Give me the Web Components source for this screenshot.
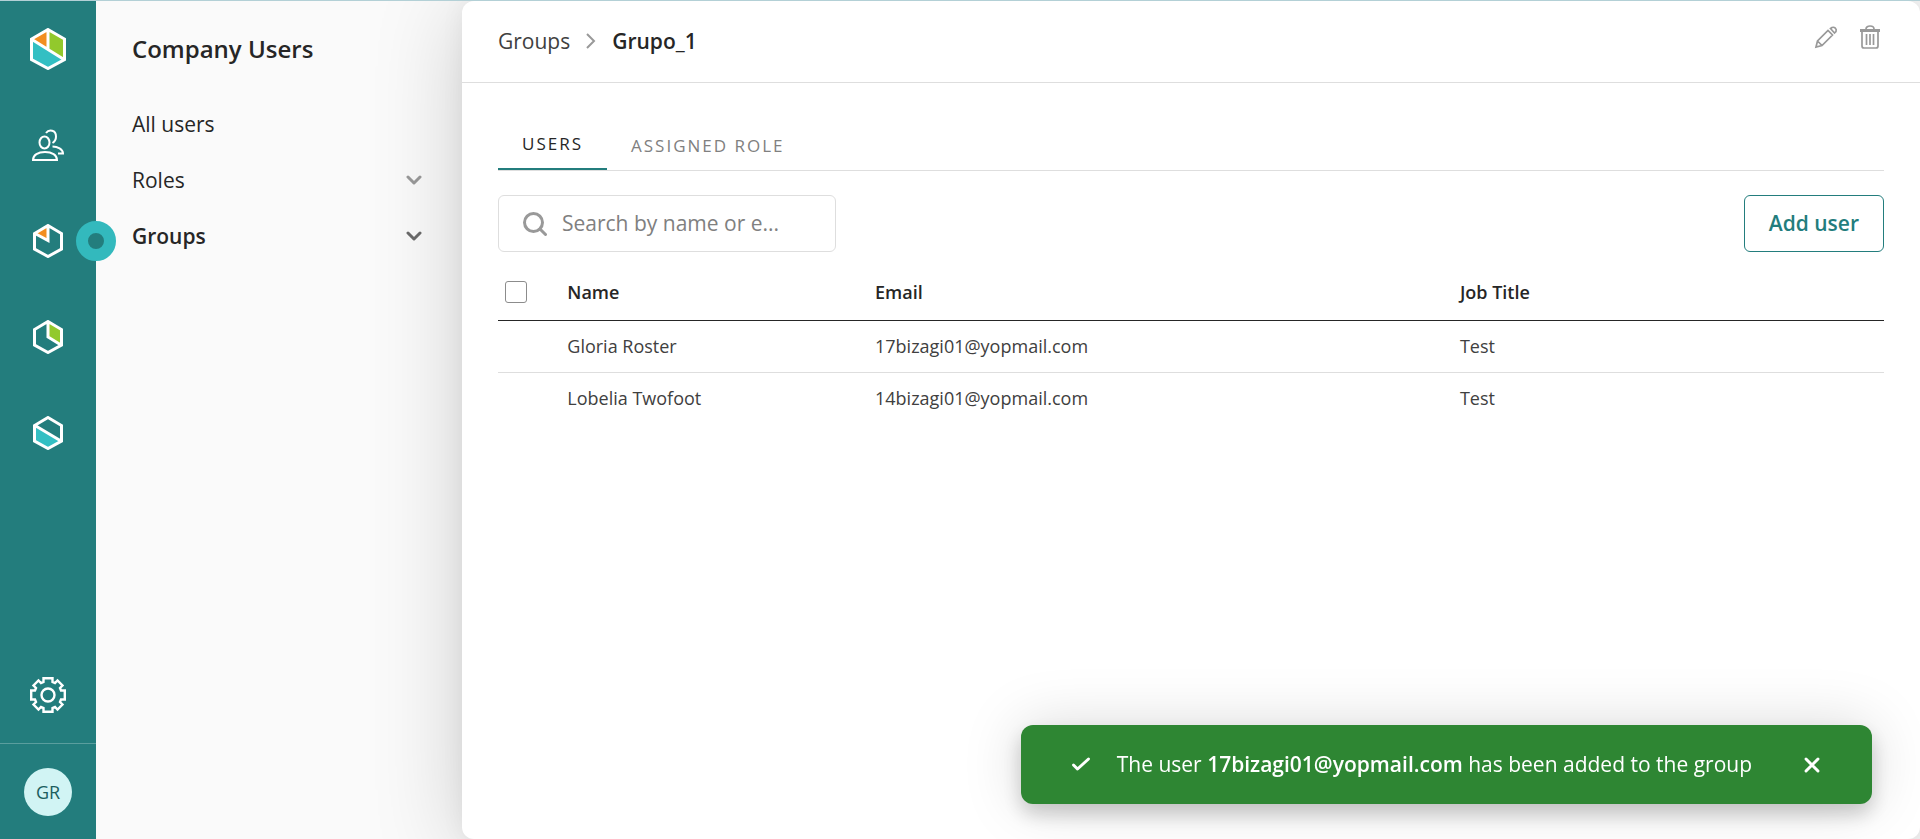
<!DOCTYPE html>
<html lang="en">
<head>
<meta charset="utf-8">
<meta name="viewport" content="width=device-width, initial-scale=1">
<title>Company Users – Groups</title>
<style>
  html, body { margin: 0; }
  body { font-family: "Open Sans", sans-serif; color: #262626; background: #fafafa; }
  toast-message b { font-weight: 600; }
</style>
</head>
<body>
<app-shell>
  <app-rail slot="rail"></app-rail>
  <side-panel slot="panel" heading="Company Users">
    <nav-item>All users</nav-item>
    <nav-item expandable>Roles</nav-item>
    <nav-item expandable current>Groups</nav-item>
  </side-panel>
  <page-header parent="Groups">Grupo_1</page-header>
  <page-content>
    <tab-strip></tab-strip>
    <tool-row>
      <search-box></search-box>
      <outline-button slot="end">Add user</outline-button>
    </tool-row>
    <user-table></user-table>
  </page-content>
</app-shell>
<toast-message>The user <b>17bizagi01@yopmail.com</b> has been added to the group</toast-message>

<script>
const define = (name, html, setup) => {
  const template = document.createElement('template');
  template.innerHTML = html;
  customElements.define(name, class extends HTMLElement {
    constructor() {
      super();
      this.attachShadow({ mode: 'open' }).append(template.content.cloneNode(true));
    }
    connectedCallback() {
      if (setup) setup(this, this.shadowRoot);
    }
  });
};

define('app-shell', `
  <style>
    :host { display: flex; min-height: 100vh; box-sizing: border-box; border-top: 1px solid #b3d0d6; overflow: hidden; }
    slot[name] { display: contents; }
    main { flex: 1; min-width: 0; position: relative; z-index: 1; background: #fff; border-radius: 12px;
      box-shadow: 0 0 24px rgba(0,0,0,.05), 0 8px 90px rgba(0,0,0,.18); }
  </style>
  <slot name="rail"></slot>
  <slot name="panel"></slot>
  <main><slot></slot></main>`);

define('app-rail', `
  <style>
    :host { display: flex; flex: none; width: 96px; background: #237d7d; position: relative; z-index: 2; }
    nav { flex: 1; display: flex; flex-direction: column; }
    a { display: grid; place-items: center; height: 96px; flex: none; position: relative; }
    .gap { flex: 1; }
    .account { height: 95px; border-top: 1px solid #5a9e9e; color: #1c5e5e; text-decoration: none; }
    .account span { width: 48px; line-height: 48px; border-radius: 50%; background: #d1f4f4; text-align: center;
      font-size: 18px; font-weight: 500; }
    svg { display: block; fill: none; }
    .toggle { position: absolute; right: -20px; top: 28px; width: 40px; height: 40px; border: 12px solid #33b9bd;
      border-radius: 50%; background: #237d7d; padding: 0; box-sizing: border-box; }
    .cell { position: relative; }
  </style>
  <nav aria-label="Main">
    <a href="#home" aria-label="Home"><svg width="36" height="42" viewBox="0 0 36 42">
      <path d="M18 2 2 11l16 10Z" fill="#f28e20"/><path d="M18 2l16 9v20L18 20Z" fill="#92c92c"/><path d="M2 11l32 20-16 9.500L2 31Z" fill="#33bfc3"/>
      <path d="M18 1.500 34.500 11v20.500L18 40.500 1.500 31.500V11ZM18 2v19M2 11.500l32 20" stroke="#fff" stroke-width="3"/></svg></a>
    <a href="#users" aria-label="Users"><svg width="32" height="32" viewBox="0 0 32 32" stroke="#fff" stroke-width="2">
      <ellipse cx="12.500" cy="13.500" rx="5" ry="6"/>
      <path d="M1 31c0-5 5-8 12-8s12 3 12 8Z"/>
      <path d="M14 4c3-4 10-3 10 3.500 0 3-1 5-3.500 6.500M20.500 17.500c5 0 10.500 2.500 10.500 7h-5"/></svg></a>
    <div class="cell">
      <a href="#company" aria-label="Company"><svg width="30" height="34" viewBox="0 0 30 34">
      <path d="M15 2 2 9.500l13 8Z" fill="#f28e20"/>
      <path d="M15 1.500l13.500 8v15.500L15 32.500 1.500 25V9.500ZM15 2v14.500L2 9.500" stroke="#fff" stroke-width="3"/></svg></a>
      <button class="toggle" type="button" aria-label="Collapse panel"></button>
    </div>
    <a href="#projects" aria-label="Projects"><svg width="30" height="34" viewBox="0 0 30 34">
      <path d="M15 2l13.500 7.500V25L15 17Z" fill="#92c92c"/>
      <path d="M15 1.500l13.500 8v15.500L15 32.500 1.500 25V9.500ZM15 2v15l13 8" stroke="#fff" stroke-width="3"/></svg></a>
    <a href="#portals" aria-label="Portals"><svg width="30" height="34" viewBox="0 0 30 34">
      <path d="M1.500 9.500 28 25l-13 7.500L1.500 25Z" fill="#33bfc3"/>
      <path d="M15 1.500l13.500 8v15.500L15 32.500 1.500 25V9.500ZM2 9.500l26 15.500" stroke="#fff" stroke-width="3"/></svg></a>
    <div class="gap"></div>
    <a href="#settings" aria-label="Settings"><svg width="36" height="36" viewBox="0 0 36 36" stroke="#fff" stroke-width="2.400">
      <path d="M13.500 1.200h9V5l2.500 1 2.500-2.500 5 5L30 11l1 2.500h3.800v9H31L30 25l2.500 2.500-5 5L25 30l-2.500 1v3.800h-9V31L11 30l-2.500 2.500-5-5L6 25l-1-2.500H1.200v-9H5L6 11 3.500 8.500l5-5L11 6l2.500-1Z"/>
      <circle cx="18" cy="18" r="6.500"/></svg></a>
    <a class="account" href="#account" aria-label="Account"><span>GR</span></a>
  </nav>`);

define('side-panel', `
  <style>
    :host { display: block; flex: none; width: 366px; box-sizing: border-box; padding: 28px 36px; background: #fafafa; }
    h1 { margin: 0 0 27px; font-size: 24px; line-height: 40px; font-weight: 600; }
  </style>
  <h1></h1>
  <nav aria-label="Company users"><slot></slot></nav>`,
  (host, root) => { root.querySelector('h1').textContent = host.getAttribute('heading'); });

define('nav-item', `
  <style>
    :host { display: block; font-size: 21px; }
    a { display: flex; align-items: center; justify-content: space-between; height: 56px; color: inherit; text-decoration: none; padding-right: 4px; }
    svg { display: none; fill: none; stroke: #999; stroke-width: 3; stroke-linecap: round; stroke-linejoin: round; }
    :host([expandable]) svg { display: block; }
    :host([current]) { font-weight: 600; }
    :host([current]) svg { stroke: #6b6b6b; }
  </style>
  <a href="#section"><slot></slot><svg width="16" height="10" viewBox="0 0 16 10"><path d="M2 2l6 6 6-6"/></svg></a>`);

define('page-header', `
  <style>
    :host { display: flex; align-items: center; justify-content: space-between; height: 81px; padding: 0 36px; border-bottom: 1px solid #dedede; font-size: 21px; }
    nav { display: flex; align-items: center; gap: 16px; padding-bottom: 2px; }
    a { color: #404040; text-decoration: none; }
    b { font-weight: 600; }
    svg { display: block; fill: none; stroke: #999; stroke-width: 2; }
    .actions { display: flex; gap: 22px; padding: 0 4px 10px 0; }
    .actions svg { stroke-width: 1.700; }
    button { padding: 0; border: 0; background: none; }
  </style>
  <nav aria-label="Breadcrumb"><a href="#groups"></a><svg width="10" height="16" viewBox="0 0 10 16"><path d="M1 1l7 7-7 7"/></svg><b><slot></slot></b></nav>
  <div class="actions">
    <button type="button" aria-label="Edit"><svg width="24" height="24" viewBox="0 0 24 24"><path d="M2 22l1.500-6L14 5.500 18.500 10 8 20.500ZM3.500 16l4.500 4.500M16.500 3.500l1.500-1c2.500-1 5 1.500 4 4l-1.500 1.500Z"/></svg></button>
    <button type="button" aria-label="Delete"><svg width="20" height="24" viewBox="0 0 20 24"><path d="M0 5.500h20" stroke-width="3"/><path d="M6 4c0-4 8-4 8 0M2 7v14q0 2 2 2h12q2 0 2-2V7M6.500 9v11M10 9v11M13.500 9v11"/></svg></button>
  </div>`,
  (host, root) => { root.querySelector('a').textContent = host.getAttribute('parent'); });

define('page-content', `
  <style>:host { display: block; padding: 45px 36px; }</style>
  <slot></slot>`);

define('tab-strip', `
  <style>
    :host { display: block; border-bottom: 1px solid #dedede; margin-bottom: 24px; }
    div { display: flex; }
    button { height: 42px; padding: 0 24px 6px; border: 0; background: none; font: 400 17px/24px "Open Sans", sans-serif; letter-spacing: 2px; color: #808080; }
    [aria-selected=true] { color: #262626; border-bottom: 2px solid #237d7d; padding-bottom: 8px; }
  </style>
  <div role="tablist">
    <button type="button" role="tab" aria-selected="true">USERS</button>
    <button type="button" role="tab" aria-selected="false">ASSIGNED ROLE</button>
  </div>`);

define('tool-row', `
  <style>:host { display: flex; justify-content: space-between; align-items: center; }</style>
  <slot></slot><slot name="end"></slot>`);

define('search-box', `
  <style>
    :host { display: block; width: 338px; }
    label { display: flex; align-items: center; gap: 15px; box-sizing: border-box; height: 57px; padding: 0 24px; border: 1px solid #dedede; border-radius: 6px; background: #fff; }
    svg { flex: none; fill: none; stroke: #999; stroke-width: 3; stroke-linecap: round; }
    input { flex: 1; min-width: 0; padding: 0 0 2px; border: 0; outline: 0; background: none; color: #262626; font: 400 21px/28px "Open Sans", sans-serif; }
    input::placeholder { color: #808080; opacity: 1; }
  </style>
  <label><svg width="24" height="24" viewBox="0 0 24 24" aria-hidden="true"><circle cx="10.500" cy="10.500" r="9"/><path d="M17 17l5.500 5.500"/></svg>
  <input type="text" aria-label="Search by name or email" placeholder="Search by name or e..."></label>`);

define('outline-button', `
  <style>
    :host { display: block; }
    button { height: 57px; padding: 0 24px 2px; border: 1px solid #237d7d; border-radius: 6px; background: #fff; color: #237d7d; font: 600 21px/28px "Open Sans", sans-serif; }
  </style>
  <button type="button"><slot></slot></button>`);

define('user-table', `
  <style>
    :host { display: block; margin-top: 16px; font-size: 18px; line-height: 24px; }
    table { width: 100%; border-spacing: 0; table-layout: fixed; }
    th, td { padding: 0 0 2px; height: 49px; text-align: left; font-weight: 400; color: #404040; border-bottom: 1px solid #dedede; }
    th { height: 48px; padding-bottom: 4px; font-weight: 600; color: #262626; border-bottom-color: #262626; }
    tbody tr:last-child td { border-bottom: 0; }
    .pick { width: 5%; } .name { width: 22.2%; } .email { width: 42.2%; }
    input { appearance: none; display: block; width: 22px; height: 22px; margin: 0 0 0 7px; border: 1px solid #8c8c8c; border-radius: 3px; background: #fff; }
  </style>
  <table>
    <thead><tr><th class="pick"><input type="checkbox" aria-label="Select all users"></th><th class="name">Name</th><th class="email">Email</th><th>Job Title</th></tr></thead>
    <tbody>
      <tr><td></td><td>Gloria Roster</td><td>17bizagi01@yopmail.com</td><td>Test</td></tr>
      <tr><td></td><td>Lobelia Twofoot</td><td>14bizagi01@yopmail.com</td><td>Test</td></tr>
    </tbody>
  </table>`);

define('toast-message', `
  <style>
    :host { position: fixed; right: 48px; bottom: 35px; z-index: 3; display: flex; align-items: center; box-sizing: border-box; height: 79px;
      padding: 0 48px; border-radius: 12px; background: #2e8633; color: #fff; font-size: 21px; line-height: 28px;
      box-shadow: 0 10px 20px rgba(0,0,0,.19), 0 0 60px rgba(0,0,0,.15); }
    svg { display: block; fill: none; stroke: #fff; stroke-width: 3; stroke-linecap: round; stroke-linejoin: round; }
    p { margin: 0 48px 0 24px; padding-bottom: 2px; }
    button { padding: 0; border: 0; background: none; }
  </style>
  <svg width="24" height="24" viewBox="0 0 24 24" aria-hidden="true"><path d="M4.500 12l4 4L19.500 6"/></svg>
  <p role="status"><slot></slot></p>
  <button type="button" aria-label="Dismiss"><svg width="24" height="24" viewBox="0 0 24 24"><path d="M6 6l12 12M18 6L6 18"/></svg></button>`);
</script>
</body>
</html>
